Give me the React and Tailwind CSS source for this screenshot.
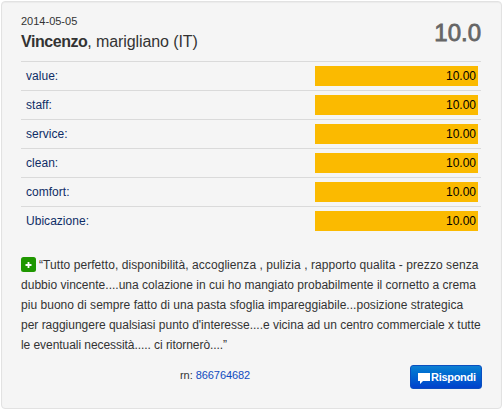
const ratings = [
  { label: 'value:', score: '10.00' },
  { label: 'staff:', score: '10.00' },
  { label: 'service:', score: '10.00' },
  { label: 'clean:', score: '10.00' },
  { label: 'comfort:', score: '10.00' },
  { label: 'Ubicazione:', score: '10.00' },
]

function RatingRow({ label, score }) {
  return (
    <div className="flex h-[29px] items-center justify-between border-t border-[#dadada] pl-[5px] pr-[3px]">
      <span className="text-[12px] leading-5 tracking-[0.03px] text-[#0f2d66]">{label}</span>
      <span className="h-5 w-[163px] bg-[#fbba00] pr-[2px] text-right text-[12px] leading-5 text-black">
        {score}
      </span>
    </div>
  )
}

function PlusIcon() {
  return (
    <svg viewBox="0 0 15 15" className="mr-[3px] inline-block h-[15px] w-[15px] align-[-3px]">
      <rect width="15" height="15" rx="2.5" fill="#1f9700" />
      <path d="M7.5 5v6M4.5 8h6" stroke="#fff" strokeWidth="1.8" />
    </svg>
  )
}

function CommentIcon() {
  return (
    <svg viewBox="0 0 12 11" className="mt-[3px] h-[11px] w-3 shrink-0" fill="#fff">
      <path d="M0 0h12v8H5L2 11V8H0z" />
    </svg>
  )
}

export default function App() {
  return (
    <div className="h-[411px] w-[504px] bg-white pl-px pt-px font-['Liberation_Sans',Arial,sans-serif] text-[#333]">
      <div className="h-[408px] w-[501px] rounded-[4px] border border-[#e2e2e2] bg-[#f5f5f5] pl-[19px] pr-5 pt-[10px] shadow-[inset_0_1px_1px_rgba(0,0,0,0.04)]">
        <div className="flex h-[49px] justify-between">
          <div>
            <p className="text-[11px] leading-[18px]">2014-05-05</p>
            <p className="mt-[2px] whitespace-nowrap text-[16px] leading-5 tracking-[-0.1px]">
              <strong className="tracking-[-0.45px]">Vincenzo</strong>, marigliano (IT)
            </p>
          </div>
          <p className="pt-[7px] text-[24px] leading-[28px] text-[#666] [-webkit-text-stroke:0.8px_#666]">
            10.0
          </p>
        </div>

        <div>
          {ratings.map((rating) => (
            <RatingRow key={rating.label} {...rating} />
          ))}
        </div>

        <div className="mt-5 whitespace-nowrap text-[12px] leading-5">
          <p className="h-5 tracking-[0.065px]">
            <PlusIcon />
            “Tutto perfetto, disponibilità, accoglienza , pulizia , rapporto qualita - prezzo senza
          </p>
          <p className="tracking-[0.015px]">
            dubbio vincente....una colazione in cui ho mangiato probabilmente il cornetto a crema
          </p>
          <p className="tracking-[0.03px]">
            piu buono di sempre fatto di una pasta sfoglia impareggiabile...posizione strategica
          </p>
          <p className="tracking-[-0.01px]">
            per raggiungere qualsiasi punto d'interesse....e vicina ad un centro commerciale x tutte
          </p>
          <p className="tracking-[-0.06px]">le eventuali necessità..... ci ritornerò....”</p>
        </div>

        <div className="-mr-px mt-[10px] flex justify-between pl-[159px]">
          <p className="text-[11px] leading-5 tracking-[-0.06px]">
            rn: <a className="text-[#0f4bc0]">866764682</a>
          </p>
          <button
            type="button"
            className="flex h-6 w-[72px] items-center gap-px rounded-[3px] border border-[#0a4fc0] bg-linear-to-b from-[#0f80d2] to-[#0440cc] pl-[7px] text-[11px] font-bold leading-5 tracking-[-0.3px] text-white"
          >
            <CommentIcon />
            Rispondi
          </button>
        </div>
      </div>
    </div>
  )
}
